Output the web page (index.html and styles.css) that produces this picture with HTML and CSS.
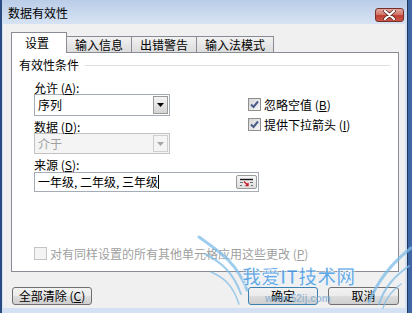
FILE: index.html
```html
<!DOCTYPE html>
<html lang="zh-CN">
<head>
    <meta charset="UTF-8">
    <meta name="viewport" content="width=device-width, initial-scale=1.0">
    <title>数据有效性</title>
    <link rel="stylesheet" href="styles.css">
</head>
<body>
    <div class="window">
        <div class="titlebar">
            <span class="title">数据有效性</span>
            <div class="close-btn">
                <svg width="13" height="10" viewBox="0 0 13 10">
                    <path d="M2 1 L11 9 M11 1 L2 9" stroke="#5a2a24" stroke-width="3.6" stroke-linecap="round"/>
                    <path d="M2 1 L11 9 M11 1 L2 9" stroke="#fff" stroke-width="2.2" stroke-linecap="round"/>
                </svg>
            </div>
        </div>

        <div class="client">
            <div class="tabs">
                <div class="tab active">设置</div>
                <div class="tab">输入信息</div>
                <div class="tab">出错警告</div>
                <div class="tab">输入法模式</div>
            </div>

            <div class="panel">
                <div class="legend">有效性条件</div>

                <div class="criteria">
                    <div class="col-left">
                        <div class="field-label">允许 (<u>A</u>):</div>
                        <div class="combo">
                            <span class="combo-text">序列</span>
                            <span class="drop">
                                <svg width="7" height="4" viewBox="0 0 7 4"><path d="M0 0 H7 L3.5 4 Z" fill="#000"/></svg>
                            </span>
                        </div>
                        <div class="field-label">数据 (<u>D</u>):</div>
                        <div class="combo disabled">
                            <span class="combo-text">介于</span>
                            <span class="drop">
                                <svg width="7" height="4" viewBox="0 0 7 4"><path d="M0 0 H7 L3.5 4 Z" fill="#a6a6a6"/></svg>
                            </span>
                        </div>
                    </div>

                    <div class="col-right">
                        <div class="check-row">
                            <span class="checkbox checked">
                                <svg width="9" height="9" viewBox="0 0 9 9"><path d="M1 4.5 L3.5 7 L8 1.5" fill="none" stroke="#4a5d8a" stroke-width="2"/></svg>
                            </span>
                            <span>忽略空值 (<u>B</u>)</span>
                        </div>
                        <div class="check-row">
                            <span class="checkbox checked">
                                <svg width="9" height="9" viewBox="0 0 9 9"><path d="M1 4.5 L3.5 7 L8 1.5" fill="none" stroke="#4a5d8a" stroke-width="2"/></svg>
                            </span>
                            <span>提供下拉箭头 (<u>I</u>)</span>
                        </div>
                    </div>
                </div>

                <div class="source">
                    <div class="field-label">来源 (<u>S</u>):</div>
                    <div class="source-input">
                        <span class="source-text">一年级, 二年级, 三年级</span><span class="caret"></span>
                        <span class="ref-btn">
                            <svg width="15" height="9" viewBox="0 0 15 9">
                                <path d="M1 1.5 H14" stroke="#1a1a1a" stroke-width="1.4"/>
                                <path d="M1 4.5 H4 M11 4.5 H14 M1 7.5 H3 M12 7.5 H14" stroke="#6b6b6b" stroke-width="1"/>
                                <path d="M5 3.5 L9 7.5 M9 4.8 V7.6 H6.4" fill="none" stroke="#c8202a" stroke-width="1.4"/>
                            </svg>
                        </span>
                    </div>
                </div>

                <div class="check-row apply">
                    <span class="checkbox disabled"></span>
                    <span>对有同样设置的所有其他单元格应用这些更改 (<u>P</u>)</span>
                </div>
            </div>

            <div class="buttons">
                <div class="btn btn-clear">全部清除 (<u>C</u>)</div>
                <div class="btn btn-ok">确定</div>
                <div class="btn">取消</div>
            </div>
        </div>

        <div class="watermark">
            <svg width="217" height="81" viewBox="0 0 217 81">
                <g fill="none" stroke="#7fbde9" stroke-linecap="round" opacity="0.75">
                    <path d="M2 5 C20 18 40 30 50 58" stroke-width="3"/>
                    <path d="M8 22 C24 30 36 40 44 62" stroke-width="2"/>
                    <path d="M14 40 C28 46 36 54 42 72" stroke-width="1.5"/>
                    <path d="M214 16 C196 30 182 46 172 70" stroke-width="3"/>
                    <path d="M212 34 C198 44 188 54 182 72" stroke-width="2"/>
                    <path d="M204 52 C196 58 190 64 186 76" stroke-width="1.5"/>
                </g>
                <text x="45" y="52" class="wm-title">我爱IT技术网</text>
                <text x="68" y="70" class="wm-url">www.52ij.com</text>
            </svg>
        </div>
    </div>
</body>
</html>
```

FILE: styles.css
```css
body {
    margin: 0;
    padding: 0;
    background: linear-gradient(90deg, #2a4a82 0%, #3f67a6 100%);
    font-family: "Noto Sans CJK SC", "Liberation Sans", sans-serif;
    font-size: 12px;
    color: #000;
    overflow: hidden;
}

u {
    text-decoration: underline;
    text-underline-offset: 1px;
}

.window {
    position: relative;
    width: 406px;
    height: 313px;
    margin-left: 2px;
    box-sizing: border-box;
    border-right: 1px solid #1d3960;
    background: #d3e1f3;
}

.titlebar {
    height: 24px;
    padding: 0 3px 0 6px;
    display: flex;
    justify-content: space-between;
    align-items: center;
    background: linear-gradient(#bacde8 0%, #cbdaee 60%, #d6e3f3 100%);
}

.title {
    line-height: 14px;
    margin-top: 1px;
}

.close-btn {
    align-self: flex-start;
    margin-top: 8px;
    width: 29px;
    height: 14px;
    box-sizing: border-box;
    border: 1px solid #76302a;
    border-radius: 3px;
    background: linear-gradient(#e4a89e 0%, #d3776c 45%, #bf3e31 55%, #c9584c 100%);
    display: flex;
    justify-content: center;
    align-items: center;
}

.client {
    height: 284px;
    margin: 0 2px 0 1px;
    padding: 8px 0 0 8px;
    box-sizing: border-box;
    background: #f0f0f0;
}

.tabs {
    display: flex;
    align-items: flex-end;
    height: 21px;
    margin-bottom: -1px;
}

.tab {
    height: 16px;
    margin-bottom: 1px;
    padding: 0 8px;
    box-sizing: border-box;
    border: 1px solid #898c95;
    border-bottom: none;
    border-left: none;
    background: linear-gradient(#f2f2f2, #dcdcdc);
    line-height: 15px;
}

.tab.active {
    position: relative;
    z-index: 1;
    height: 21px;
    margin-bottom: 0;
    padding: 0 17px 0 13px;
    border-left: 1px solid #898c95;
    background: #fff;
    line-height: 20px;
}

.panel {
    width: 388px;
    height: 220px;
    box-sizing: border-box;
    border: 1px solid #898c95;
    background: #fff;
    padding: 5px 8px 0 7px;
}

.legend {
    display: flex;
    align-items: center;
    line-height: 14px;
}

.legend::after {
    content: "";
    flex: 1;
    margin-left: 6px;
    border-top: 1px solid #dcdfe3;
}

.criteria {
    display: flex;
    margin: 10px 0 0 15px;
}

.col-left {
    width: 214px;
}

.field-label {
    line-height: 12px;
}

.combo {
    width: 136px;
    height: 22px;
    margin-bottom: 5px;
    box-sizing: border-box;
    border: 1px solid #a5acb5;
    background: #fff;
    display: flex;
    align-items: center;
    padding: 1px;
}

.combo-text {
    flex: 1;
    padding-left: 2px;
    line-height: 14px;
}

.drop {
    width: 15px;
    height: 18px;
    box-sizing: border-box;
    border: 1px solid #9a9a9a;
    background: linear-gradient(#f4f4f4, #d4d4d4);
    display: flex;
    justify-content: center;
    align-items: center;
}

.combo.disabled {
    height: 21px;
    border-color: #c3c3c3;
    background: #f4f4f4;
    color: #a0a0a0;
}

.combo.disabled .drop {
    height: 17px;
    border-color: #cfcfcf;
    background: #f4f4f4;
}

.col-right {
    padding-top: 16px;
}

.check-row {
    display: flex;
    align-items: center;
    gap: 3px;
    height: 13px;
    margin-bottom: 7px;
    line-height: 13px;
}

.checkbox {
    width: 13px;
    height: 13px;
    box-sizing: border-box;
    border: 1px solid #8e8f8f;
    background: linear-gradient(135deg, #d6d6d6, #f6f6f6);
    display: flex;
    justify-content: center;
    align-items: center;
}

.checkbox.disabled {
    border-color: #c3c3c3;
    background: #f4f4f4;
}

.source {
    margin-left: 15px;
}

.source-input {
    width: 225px;
    height: 20px;
    margin-top: 1px;
    box-sizing: border-box;
    border: 1px solid #a5acb5;
    padding: 0 1px 0 3px;
    display: flex;
    align-items: center;
}

.source-text {
    line-height: 14px;
}

.caret {
    width: 1px;
    height: 14px;
    background: #000;
}

.ref-btn {
    margin-left: auto;
    width: 21px;
    height: 14px;
    box-sizing: border-box;
    border: 1px solid #9b9b9b;
    border-radius: 2px;
    background: linear-gradient(#f6f6f6, #dedede);
    display: flex;
    justify-content: center;
    align-items: center;
}

.apply {
    margin: 55px 0 0 15px;
    color: #a0a0a0;
}

.buttons {
    width: 388px;
    margin-top: 15px;
    padding-left: 1px;
    box-sizing: border-box;
    display: flex;
    gap: 10px;
}

.btn {
    width: 71px;
    height: 18px;
    box-sizing: border-box;
    border: 1px solid #707070;
    border-radius: 3px;
    background: linear-gradient(#f2f2f2 0%, #ebebeb 50%, #dddddd 51%, #cfcfcf 100%);
    text-align: center;
    line-height: 16px;
}

.btn-clear {
    width: 80px;
}

.btn-ok {
    width: 70px;
    margin-left: auto;
    border-color: #3c7fb1;
}

.watermark {
    position: absolute;
    left: 195px;
    top: 232px;
    pointer-events: none;
}

.wm-title {
    font-family: "Noto Sans CJK SC", sans-serif;
    font-size: 19px;
    font-weight: bold;
    fill: #3b93e3;
    fill-opacity: 0.8;
    stroke: #ffffff;
    stroke-width: 0.6;
}

.wm-url {
    font-family: "Liberation Sans", sans-serif;
    font-size: 10px;
    font-weight: bold;
    fill: #7aa6cc;
    fill-opacity: 0.7;
}
```
